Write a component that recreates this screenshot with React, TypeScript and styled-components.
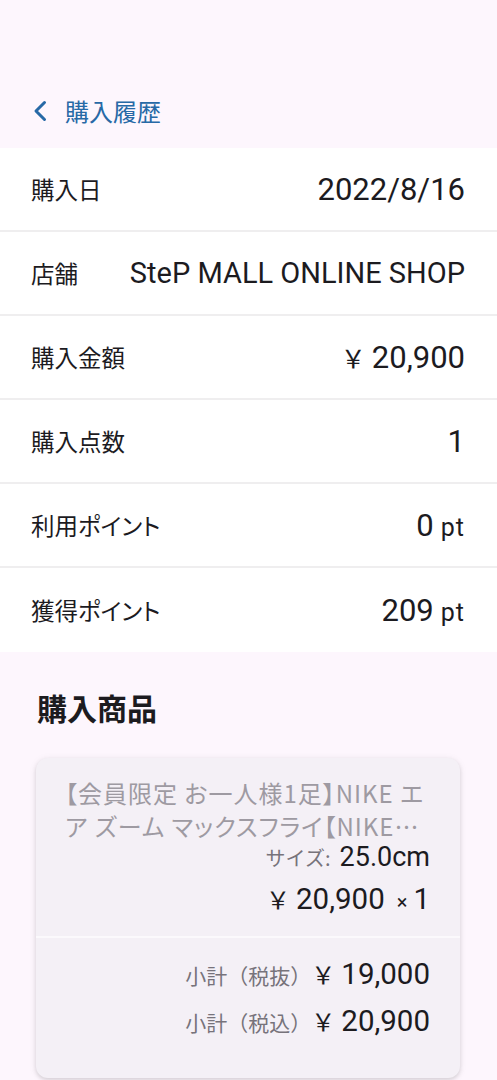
import React from "react";
import styled, { createGlobalStyle } from "styled-components";

const Global = createGlobalStyle`
  html, body { margin: 0; padding: 0; }
  body {
    background: #fdf6fd;
    font-family: Roboto, "Noto Sans CJK JP", sans-serif;
    color: #1c1b1f;
  }
`;

const Page = styled.div`
  width: 497px;
  min-height: 1080px;
  background: #fdf6fd;
  overflow: hidden;
`;

const Header = styled.header`
  height: 148px;
  box-sizing: border-box;
  padding: 93px 0 0 33px;
  display: flex;
  align-items: flex-start;
`;

const BackButton = styled.button`
  display: flex;
  align-items: center;
  gap: 18px;
  background: none;
  border: none;
  padding: 0;
  color: #2769a6;
  font-family: "Noto Sans CJK JP", sans-serif;
  font-size: 24px;
  line-height: 36px;
`;

const InfoList = styled.section`
  background: #ffffff;
`;

const Row = styled.div<{ $last?: boolean }>`
  height: 84px;
  box-sizing: border-box;
  padding: 0 32px 0 31px;
  display: flex;
  align-items: center;
  justify-content: space-between;
  border-bottom: ${(p) => (p.$last ? "none" : "2px solid #efeeef")};
`;

const Label = styled.span`
  font-family: "Noto Sans CJK JP", sans-serif;
  font-size: 23.5px;
  font-feature-settings: "palt";
  color: #1c1b1f;
`;

const Value = styled.span<{ $compact?: boolean }>`
  display: flex;
  align-items: baseline;
  font-family: Roboto, "Noto Sans CJK JP", sans-serif;
  font-size: ${(p) => (p.$compact ? 29 : 31)}px;
  color: #1c1b1f;
  white-space: nowrap;
`;

const Unit = styled.span`
  font-size: 25px;
  letter-spacing: 1px;
  margin-left: 7px;
`;

const Section = styled.section`
  padding: 35px 37px 0 36px;
`;

const SectionTitle = styled.h2`
  margin: 0 0 31px 1px;
  font-family: "Noto Sans CJK JP", sans-serif;
  font-weight: 700;
  font-size: 30px;
  line-height: 40px;
  color: #1c1b1f;
`;

const Card = styled.div`
  background: #f4f0f6;
  border-radius: 12px;
  box-shadow: 0 2px 4px rgba(0, 0, 0, 0.13), 0 1px 9px rgba(0, 0, 0, 0.06);
  overflow: hidden;
`;

const CardTop = styled.div`
  padding: 18px 30px 16px 29px;
  display: flex;
  flex-direction: column;
  align-items: flex-end;
  border-bottom: 2px solid #fbf9fc;
`;

const ProductName = styled.div`
  align-self: stretch;
  font-family: "Noto Sans CJK JP", sans-serif;
  font-size: 24px;
  font-feature-settings: "palt";
  letter-spacing: 1px;
  line-height: 33px;
  color: #9e9aa2;
  display: -webkit-box;
  -webkit-line-clamp: 2;
  -webkit-box-orient: vertical;
  overflow: hidden;
`;

const SizeLine = styled.div`
  display: flex;
  align-items: baseline;
  font-size: 27px;
  line-height: 30px;
  color: #1c1b1f;
`;

const SizeLabel = styled.span`
  font-family: "Noto Sans CJK JP", sans-serif;
  font-size: 20px;
  color: #77737b;
  margin-right: 9px;
`;

const PriceLine = styled.div`
  display: flex;
  align-items: baseline;
  margin-top: 8px;
  font-size: 29.5px;
  line-height: 36px;
  color: #1c1b1f;
`;

const Yen = styled.span<{ $size?: number }>`
  font-family: "Noto Sans CJK JP", sans-serif;
  font-size: ${(p) => p.$size ?? 24}px;
  margin-right: 6px;
`;

const Times = styled.span`
  font-size: 20px;
  margin: 0 6px 0 12px;
`;

const CardBottom = styled.div`
  padding: 18px 30px 38px 29px;
  display: flex;
  flex-direction: column;
  align-items: flex-end;
  gap: 10px;
`;

const SubtotalLine = styled.div`
  display: flex;
  align-items: baseline;
  font-size: 29.5px;
  line-height: 36px;
  color: #1c1b1f;
`;

const SubLabel = styled.span`
  font-family: "Noto Sans CJK JP", sans-serif;
  font-size: 21px;
  color: #77737b;
`;

type RowData = { label: string; value: string; unit?: string; yen?: boolean; compact?: boolean };

const rows: RowData[] = [
  { label: "購入日", value: "2022/8/16" },
  { label: "店舗", value: "SteP MALL ONLINE SHOP", compact: true },
  { label: "購入金額", value: "20,900", yen: true },
  { label: "購入点数", value: "1" },
  { label: "利用ポイント", value: "0", unit: "pt" },
  { label: "獲得ポイント", value: "209", unit: "pt" },
];

export default function App() {
  return (
    <Page>
      <Global />
      <Header>
        <BackButton>
          <svg width="14" height="22" viewBox="0 0 14 22" fill="none">
            <path d="M11.5 2.5 L3 11 L11.5 19.5" stroke="#2769a6" strokeWidth="3" strokeLinecap="round" strokeLinejoin="round" />
          </svg>
          購入履歴
        </BackButton>
      </Header>
      <InfoList>
        {rows.map((r, i) => (
          <Row key={r.label} $last={i === rows.length - 1}>
            <Label>{r.label}</Label>
            <Value $compact={r.compact}>
              {r.yen && <Yen $size={25}>￥</Yen>}
              {r.value}
              {r.unit && <Unit>{r.unit}</Unit>}
            </Value>
          </Row>
        ))}
      </InfoList>
      <Section>
        <SectionTitle>購入商品</SectionTitle>
        <Card>
          <CardTop>
            <ProductName>【会員限定 お一人様1足】NIKE エア ズーム マックスフライ【NIKEエア ズーム マックスフライ】</ProductName>
            <SizeLine>
              <SizeLabel>サイズ:</SizeLabel>25.0cm
            </SizeLine>
            <PriceLine>
              <Yen>￥</Yen>20,900<Times>×</Times>1
            </PriceLine>
          </CardTop>
          <CardBottom>
            <SubtotalLine>
              <SubLabel>小計（税抜）</SubLabel>
              <Yen>￥</Yen>19,000
            </SubtotalLine>
            <SubtotalLine>
              <SubLabel>小計（税込）</SubLabel>
              <Yen>￥</Yen>20,900
            </SubtotalLine>
          </CardBottom>
        </Card>
      </Section>
    </Page>
  );
}
